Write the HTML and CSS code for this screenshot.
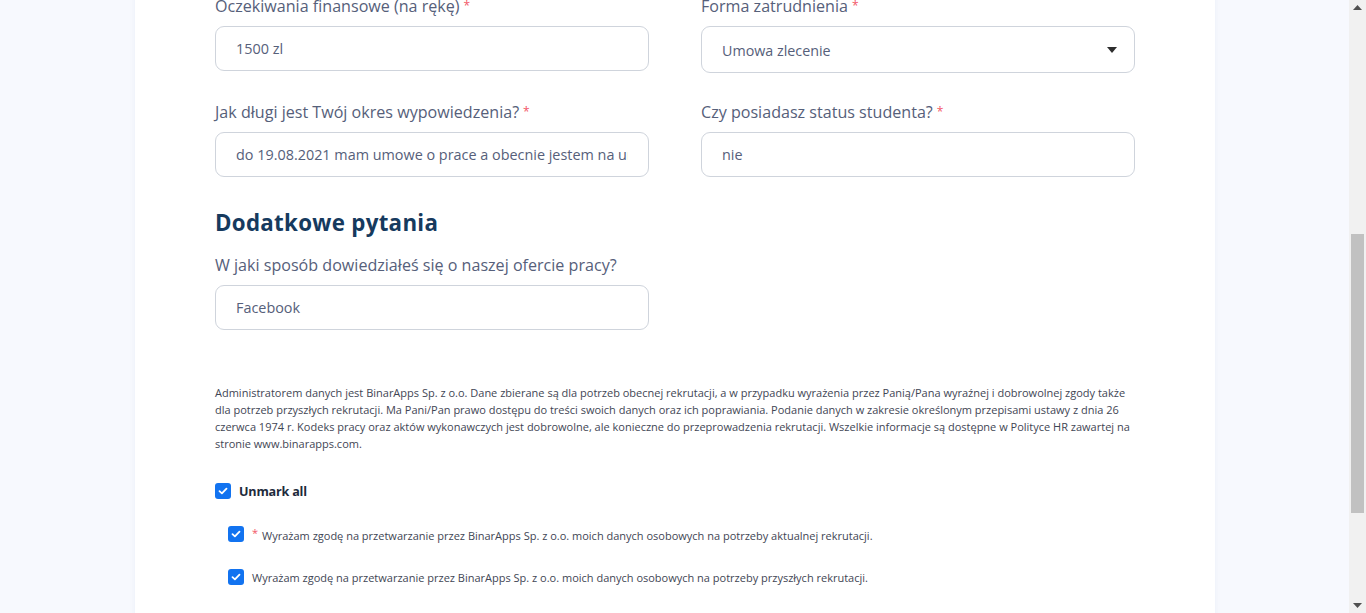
FILE: index.html
```html
<!DOCTYPE html>
<html lang="pl">
<head>
<meta charset="utf-8">
<title>Formularz</title>
<link rel="stylesheet" href="styles.css">
</head>
<body>
<div class="viewport">
  <main class="page">
    <section class="card">
      <div class="grid">
        <div class="field">
          <label class="label">Oczekiwania finansowe (na rękę)<span class="req">*</span></label>
          <input class="input" type="text" value="1500 zl" readonly>
        </div>
        <div class="field">
          <label class="label">Forma zatrudnienia<span class="req">*</span></label>
          <div class="select">
            <span>Umowa zlecenie</span>
            <svg class="caret" width="10" height="6" viewBox="0 0 10 6"><path d="M0 0 H10 L5 6 Z" fill="#2d2d2d"/></svg>
          </div>
        </div>
        <div class="field">
          <label class="label">Jak długi jest Twój okres wypowiedzenia?<span class="req">*</span></label>
          <input class="input" type="text" value="do 19.08.2021 mam umowe o prace a obecnie jestem na urlopie" readonly>
        </div>
        <div class="field">
          <label class="label">Czy posiadasz status studenta?<span class="req">*</span></label>
          <input class="input" type="text" value="nie" readonly>
        </div>
      </div>

      <h2 class="heading">Dodatkowe pytania</h2>
      <div class="grid single">
        <div class="field">
          <label class="label">W jaki sposób dowiedziałeś się o naszej ofercie pracy?</label>
          <input class="input" type="text" value="Facebook" readonly>
        </div>
      </div>

      <p class="notice">Administratorem danych jest BinarApps Sp. z o.o. Dane zbierane są dla potrzeb obecnej rekrutacji, a w przypadku wyrażenia przez Panią/Pana wyraźnej i dobrowolnej zgody także dla potrzeb przyszłych rekrutacji. Ma Pani/Pan prawo dostępu do treści swoich danych oraz ich poprawiania. Podanie danych w zakresie określonym przepisami ustawy z dnia 26 czerwca 1974 r. Kodeks pracy oraz aktów wykonawczych jest dobrowolne, ale konieczne do przeprowadzenia rekrutacji. Wszelkie informacje są dostępne w Polityce HR zawartej na stronie www.binarapps.com.</p>

      <div class="check main">
        <span class="box"><svg width="10" height="8" viewBox="0 0 10 8"><path d="M1.5 4.2 L3.9 6.4 L8.5 1.6" fill="none" stroke="#fff" stroke-width="1.8" stroke-linecap="round" stroke-linejoin="round"/></svg></span>
        <span class="main-text">Unmark all</span>
      </div>
      <div class="consents">
        <div class="check sub">
          <span class="box"><svg width="10" height="8" viewBox="0 0 10 8"><path d="M1.5 4.2 L3.9 6.4 L8.5 1.6" fill="none" stroke="#fff" stroke-width="1.8" stroke-linecap="round" stroke-linejoin="round"/></svg></span>
          <span class="sub-text"><span class="req small">*</span>Wyrażam zgodę na przetwarzanie przez BinarApps Sp. z o.o. moich danych osobowych na potrzeby aktualnej rekrutacji.</span>
        </div>
        <div class="check sub">
          <span class="box"><svg width="10" height="8" viewBox="0 0 10 8"><path d="M1.5 4.2 L3.9 6.4 L8.5 1.6" fill="none" stroke="#fff" stroke-width="1.8" stroke-linecap="round" stroke-linejoin="round"/></svg></span>
          <span class="sub-text">Wyrażam zgodę na przetwarzanie przez BinarApps Sp. z o.o. moich danych osobowych na potrzeby przyszłych rekrutacji.</span>
        </div>
      </div>
    </section>
  </main>
  <div class="scrollbar">
    <svg class="arrow" width="9" height="5" viewBox="0 0 9 5"><path d="M0 5 H9 L4.5 0 Z" fill="#505050"/></svg>
    <div class="track"><div class="thumb"></div></div>
    <svg class="arrow" width="9" height="5" viewBox="0 0 9 5"><path d="M0 0 H9 L4.5 5 Z" fill="#505050"/></svg>
  </div>
</div>
</body>
</html>
```

FILE: styles.css
```css
* { box-sizing: border-box; }
html, body {
  margin: 0;
  padding: 0;
  height: 100%;
  overflow: hidden;
}
body {
  font-family: "Open Sans", "Noto Sans", sans-serif;
  background: #f7f9fe;
  color: #525f7f;
}
.viewport {
  display: flex;
  height: 613px;
}
.page {
  flex: 1;
  display: flex;
  padding-left: 135px;
  overflow: hidden;
}
.card {
  width: 1080px;
  flex: none;
  background: #fff;
  box-shadow: 0 0 6px rgba(40, 60, 120, 0.06);
  padding: 0 80px;
  margin-top: -6px;
  min-height: 640px;
}
.grid {
  display: grid;
  grid-template-columns: 434px 434px;
  column-gap: 52px;
  row-gap: 27px;
}
.field {
  display: flex;
  flex-direction: column;
}
.label {
  font-size: 16.1px;
  line-height: 24px;
  height: 24px;
  margin-bottom: 8px;
  color: #56607a;
  white-space: nowrap;
}
.req {
  color: #f25767;
  font-size: 12px;
  margin-left: 4px;
  vertical-align: 2px;
}
.input {
  height: 45px;
  border: 1px solid #cfd4dc;
  border-radius: 9px;
  padding: 0 20px;
  font-family: inherit;
  font-size: 14.4px;
  color: #56607a;
  background: #fff;
  outline: none;
  width: 100%;
}
.select {
  height: 47px;
  border: 1px solid #cfd4dc;
  border-radius: 9px;
  padding: 1px 17px 0 20px;
  font-size: 14.3px;
  color: #56607a;
  display: flex;
  align-items: center;
  justify-content: space-between;
}
.caret { display: block; }
.heading {
  margin: 31px 0 15px;
  font-size: 22.3px;
  line-height: 30px;
  font-weight: 700;
  color: #163a5e;
  letter-spacing: 0.3px;
}
.notice {
  margin: 54px 0 0;
  font-size: 11px;
  line-height: 17px;
  color: #3f4654;
}
.check {
  display: flex;
  align-items: center;
}
.box {
  width: 16px;
  height: 16px;
  border-radius: 3px;
  background: #1273f0;
  display: flex;
  align-items: center;
  justify-content: center;
  flex: none;
}
.check.main {
  margin-top: 29px;
  height: 20px;
}
.main-text {
  margin-left: 8px;
  font-size: 12.6px;
  letter-spacing: -0.2px;
  font-weight: 700;
  color: #1e2b3c;
}
.consents {
  padding-left: 13px;
  display: flex;
  flex-direction: column;
  gap: 23px;
  margin-top: 23px;
}
.check.sub { height: 20px; }
.sub-text {
  margin-left: 8px;
  font-size: 11px;
  color: #3f4654;
}
.req.small {
  margin-left: 0;
  margin-right: 4px;
  vertical-align: 3px;
  font-size: 11px;
}
.scrollbar {
  width: 17px;
  flex: none;
  background: #f1f1f1;
  display: flex;
  flex-direction: column;
  align-items: center;
}
.arrow { margin: 5px 0; flex: none; }
.track {
  flex: 1;
  width: 100%;
  padding: 219px 2px 0;
}
.thumb {
  height: 279px;
  background: #c1c1c1;
}
```
